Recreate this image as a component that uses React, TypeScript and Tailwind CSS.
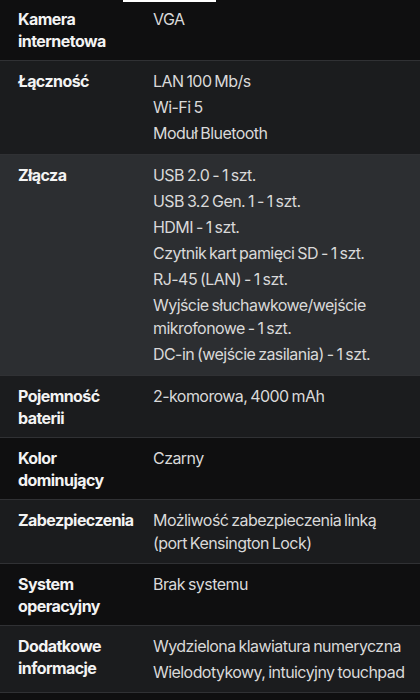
import React from 'react';

type Spec = {
  label: string;
  values: string[];
  bg: string;
};

const specs: Spec[] = [
  { label: 'Kamera internetowa', values: ['VGA'], bg: 'bg-[#0f0f10]' },
  { label: 'Łączność', values: ['LAN 100 Mb/s', 'Wi-Fi 5', 'Moduł Bluetooth'], bg: 'bg-[#1b1c1e]' },
  {
    label: 'Złącza',
    values: [
      'USB 2.0 - 1 szt.',
      'USB 3.2 Gen. 1 - 1 szt.',
      'HDMI - 1 szt.',
      'Czytnik kart pamięci SD - 1 szt.',
      'RJ-45 (LAN) - 1 szt.',
      'Wyjście słuchawkowe/wejście mikrofonowe - 1 szt.',
      'DC-in (wejście zasilania) - 1 szt.',
    ],
    bg: 'bg-[#2c2e31]',
  },
  { label: 'Pojemność baterii', values: ['2-komorowa, 4000 mAh'], bg: 'bg-[#1b1c1e]' },
  { label: 'Kolor dominujący', values: ['Czarny'], bg: 'bg-[#0f0f10]' },
  { label: 'Zabezpieczenia', values: ['Możliwość zabezpieczenia linką (port Kensington Lock)'], bg: 'bg-[#1b1c1e]' },
  { label: 'System operacyjny', values: ['Brak systemu'], bg: 'bg-[#0f0f10]' },
  {
    label: 'Dodatkowe informacje',
    values: ['Wydzielona klawiatura numeryczna', 'Wielodotykowy, intuicyjny touchpad'],
    bg: 'bg-[#1b1c1e]',
  },
];

const App: React.FC = () => {
  return (
    <div
      className="relative min-h-[700px] w-full bg-[#0f0f10] text-[16px] tracking-[-0.035em] [word-spacing:-1px]"
      style={{ fontFamily: 'Inter, "Noto Sans", sans-serif' }}
    >
      {/* bottom edge of the button above */}
      <div className="absolute left-[123px] top-0 h-[2px] w-[93px] bg-white" />

      {specs.map((spec, idx) => (
        <div
          key={spec.label}
          className={`${spec.bg} flex pl-[18px] pr-2 ${spec.values.length > 2 ? 'pb-[9px]' : 'pb-[8px]'} ${idx === 0 ? 'pt-[8px]' : 'border-t border-[#303134] pt-[9px]'}`}
        >
          <div className="w-[135px] shrink-0 pr-[14px] font-bold leading-[22px] text-[#f3f3f3]">{spec.label}</div>
          <div className="flex flex-1 flex-col gap-[3px] text-[#d9d9d9]">
            {spec.values.map((v) => (
              <p key={v} className="leading-[23px]">
                {v}
              </p>
            ))}
          </div>
        </div>
      ))}
      <div className="border-t border-[#303134]" />
    </div>
  );
};

export default App;
